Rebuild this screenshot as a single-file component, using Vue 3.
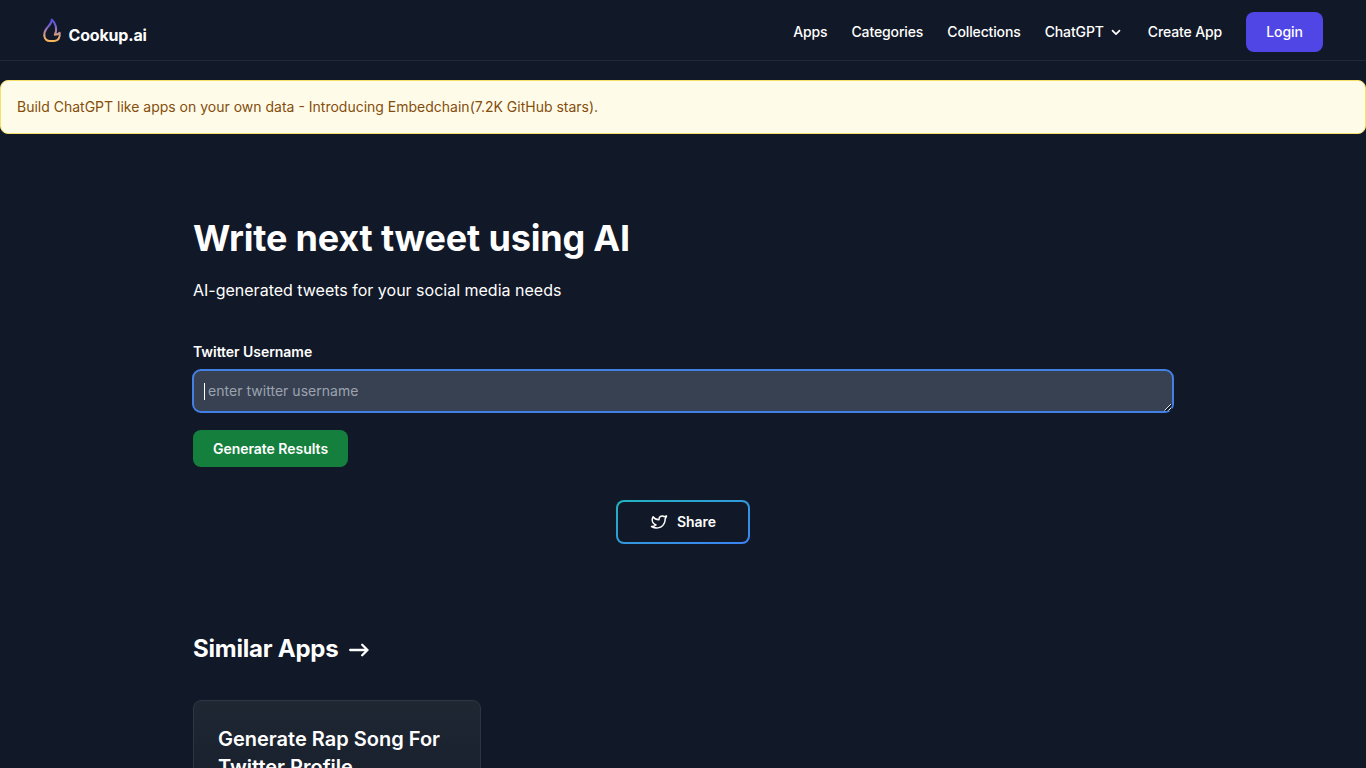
<script setup>
const links = ['Apps', 'Categories', 'Collections']
</script>

<template>
  <div class="page">
    <header class="header">
      <a class="brand">
        <svg class="flame" width="20" height="26" viewBox="0 0 20 26" fill="none">
          <defs>
            <linearGradient id="flame" x1="10" y1="1" x2="10" y2="25" gradientUnits="userSpaceOnUse">
              <stop stop-color="#4f46e5" />
              <stop offset=".35" stop-color="#7b63cc" />
              <stop offset=".72" stop-color="#d9a083" />
              <stop offset="1" stop-color="#fbb955" />
            </linearGradient>
          </defs>
          <path d="M9.800 2.500C10 6.500 7 8.300 4.500 11.700C.8 16.700 1.700 24 8 24H12.200C16.300 24 18.300 20.500 17.700 15.800C16.500 17 15 17.700 12.800 17.800C14.700 14.500 14.300 11.800 13.800 9.200C13.200 6.200 11.800 4.500 9.800 2.500Z" stroke="url(#flame)" stroke-width="2" stroke-linejoin="round" />
        </svg>
        <span class="name">Cookup.ai</span>
      </a>
      <nav class="nav">
        <a v-for="link in links" :key="link">{{ link }}</a>
        <a class="menu">ChatGPT
          <svg width="10" height="7" viewBox="0 0 10 7" fill="none"><path d="M1.500 1.700L5 5.200L8.500 1.700" stroke="#fff" stroke-width="1.700" stroke-linecap="round" stroke-linejoin="round" /></svg>
        </a>
        <a>Create App</a>
        <button class="login">Login</button>
      </nav>
    </header>
    <div class="banner">Build ChatGPT like apps on your own data - Introducing Embedchain(7.2K GitHub stars).</div>
    <main class="main">
      <h1>Write next tweet using AI</h1>
      <p class="lead">AI-generated tweets for your social media needs</p>
      <label class="label">Twitter Username</label>
      <div class="field">
        <i class="caret"></i><span>enter twitter username</span>
        <svg class="grip" width="9" height="9" viewBox="0 0 9 9"><path d="M2.500 9L9 2.500M6.500 9L9 6.500" stroke="#10151f" stroke-width="1.500" /><path d="M1.500 8.500L8 2M5.500 8.500L8 6" stroke="#e5e7eb" stroke-width="1" /></svg>
      </div>
      <button class="generate">Generate Results</button>
      <button class="share">
        <svg width="18" height="18" viewBox="0 0 24 24" fill="none" stroke="#fff" stroke-width="2" stroke-linecap="round" stroke-linejoin="round"><path d="M22 4.010c-1 .49-1.980.689-3 .99-1.121-1.265-2.783-1.335-4.380-.737S11.977 6.323 12 8v1c-3.245.083-6.135-1.395-8-4 0 0-4.182 7.433 4 11-1.872 1.247-3.739 2.088-6 2 3.308 1.803 6.913 2.423 10.034 1.517 3.580-1.040 6.522-3.723 7.651-7.742a13.840 13.840 0 0 0 .497-3.753C20.180 7.773 21.692 5.250 22 4.009z" /></svg>
        <span>Share</span>
      </button>
      <h2>Similar Apps
        <svg width="20" height="14" viewBox="0 0 20 14" fill="none"><path d="M1.200 7H18.500M13.200 1.800L18.500 7L13.200 12.200" stroke="#fff" stroke-width="2.300" stroke-linecap="round" stroke-linejoin="round" /></svg>
      </h2>
      <article class="card">
        <h3>Generate Rap Song For Twitter Profile</h3>
      </article>
    </main>
  </div>
</template>

<style>
body { margin: 0; background: #111827; overflow: hidden; }
</style>

<style scoped>
* { box-sizing: border-box; }
.page { height: 768px; overflow: hidden; background: #111827; color: #fff; font-family: Inter, sans-serif; font-size: 14px; line-height: 20px; }
button { font: inherit; color: #fff; border: 0; padding: 0; }
.header { height: 61px; border-bottom: 1px solid #1f2937; display: flex; justify-content: space-between; padding: 0 43px 0 42px; }
.brand { display: flex; align-items: flex-start; padding-top: 17px; }
.name { font-size: 16px; font-weight: 700; line-height: 24px; letter-spacing: -.17px; margin: 6px 0 0 6.5px; }
.nav { display: flex; align-items: center; height: 40px; margin-top: 12px; gap: 24px; font-weight: 500; letter-spacing: -.13px; }
.menu { display: flex; align-items: center; gap: 7px; margin-right: 3px; }
.login { width: 77px; height: 40px; border-radius: 8px; background: #4f46e5; font-weight: 500; letter-spacing: -.1px; }
.banner { margin-top: 19px; height: 54px; padding: 16px; border: 1px solid #f5e16a; border-radius: 8px; background: #fefce8; color: #854d0e; }
.main { width: 980px; margin: 0 auto; display: flex; flex-direction: column; align-items: flex-start; }
h1, h2, h3, p { margin: 0; }
h1 { margin-top: 84px; font-size: 36px; line-height: 40px; font-weight: 700; letter-spacing: -.18px; }
.lead { margin-top: 20px; font-size: 16px; line-height: 24px; }
.label { margin-top: 40px; font-weight: 600; letter-spacing: -.05px; }
.field { position: relative; display: flex; align-items: center; width: 982px; height: 44px; margin: 7px -1px 0; padding-left: 10px; border: 2px solid #4280e6; border-radius: 9px; background: #374151; color: #9ca3af; letter-spacing: .03px; }
.caret { width: 1px; height: 17px; margin-right: 3px; background: #fff; }
.grip { position: absolute; right: 0; bottom: 0; }
.generate { width: 155px; height: 37px; margin-top: 17px; border-radius: 8px; background: #15803d; font-weight: 600; letter-spacing: -.03px; }
.share { align-self: center; width: 134px; height: 44px; margin-top: 33px; display: flex; align-items: center; justify-content: center; gap: 9px; border: 2px solid transparent; border-radius: 8px; background: linear-gradient(#111827, #111827) padding-box, linear-gradient(to bottom right, #20b5bd, #3299dc 50%, #3b82f6) border-box; font-weight: 600; }
h2 { display: flex; align-items: center; gap: 10px; margin-top: 89px; font-size: 24px; line-height: 32px; font-weight: 700; letter-spacing: -.22px; }
h2 svg { margin-top: 2px; }
.card { width: 288px; height: 180px; margin-top: 35px; padding: 24px; border: 1px solid #2c3543; border-radius: 8px; background: linear-gradient(#1f2733, #111827); }
h3 { font-size: 20px; line-height: 28px; font-weight: 600; }
</style>
